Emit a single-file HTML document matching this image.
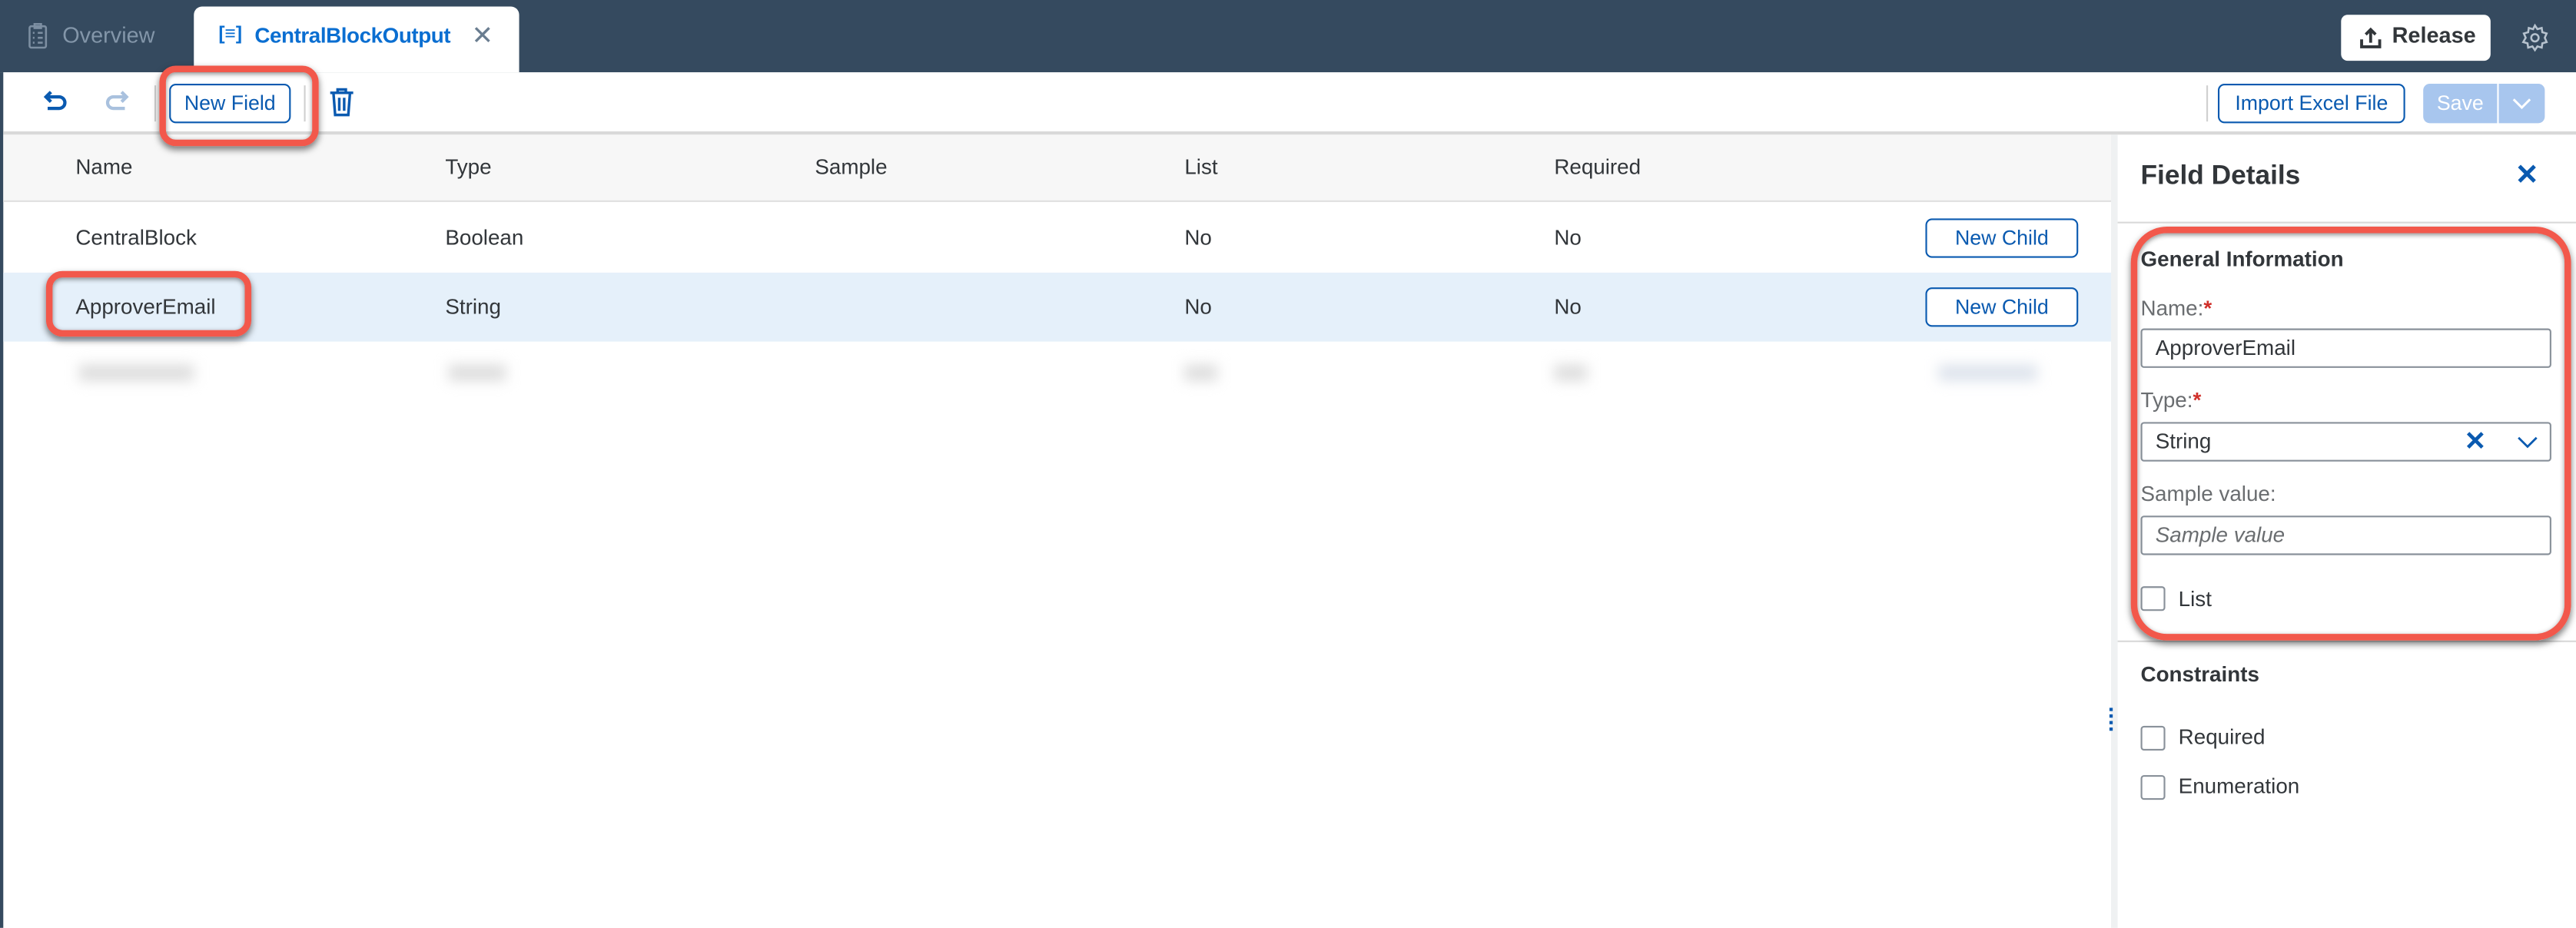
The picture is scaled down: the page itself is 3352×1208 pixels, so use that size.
<!DOCTYPE html>
<html><head><meta charset="utf-8"><style>
html,body{margin:0;padding:0;width:3352px;height:1208px;overflow:hidden;background:#fff}
#w{position:absolute;left:0;top:0;width:1568px;height:565px;transform:scale(2.13776);transform-origin:0 0;font-family:"Liberation Sans",sans-serif;font-size:13px;color:#32363a}
.a{position:absolute}
.btn{position:absolute;border:1px solid #0a5ab0;border-radius:4px;background:#fff;color:#0a5ab0;font-size:12.5px;text-align:center;box-sizing:border-box}
.hl{position:absolute;z-index:5;border:4px solid #f2584b;box-shadow:0 2px 4px rgba(0,0,0,.5),inset 0 1px 3px rgba(0,0,0,.45);box-sizing:border-box}
.inp{position:absolute;left:1303px;width:250px;height:24px;border:1px solid #89919a;border-radius:2px;box-sizing:border-box;padding-left:8px;line-height:22px;font-size:13px}
.cb{position:absolute;left:1303px;width:15px;height:15px;border:1px solid #89919a;border-radius:2px;box-sizing:border-box}
.lbl{position:absolute;left:1303px;color:#6a6d70;font-size:13px}
.req{color:#d0302a;font-weight:bold}
</style></head><body><div id="w">
<div class="a" style="left:0;top:0;width:1568px;height:44px;background:#354a5f"></div>
<div class="a" style="left:0;top:44px;width:2px;height:521px;background:#354a5f"></div>
<svg class="a" style="left:17px;top:14px" width="12" height="16" viewBox="0 0 12 16" fill="none" stroke="#7d8fa2" stroke-width="1.2"><rect x="1" y="2" width="10" height="13" rx="1"/><rect x="4" y="0.6" width="4" height="2.5"/><path d="M3 6h1M6 6h3M3 9h1M6 9h3M3 12h1M6 12h3"/></svg>
<div class="a" style="left:38px;top:14px;color:#8396a9;font-size:13.5px">Overview</div>
<div class="a" style="left:118px;top:4px;width:198px;height:40px;background:#fff;border-radius:5px 5px 0 0"></div>
<div class="a" style="left:133px;top:15px;color:#0a6ed1;font-size:11.5px;font-weight:bold">[≡]</div>
<div class="a" style="left:155px;top:14px;color:#0a6ed1;font-size:13px;font-weight:bold;letter-spacing:-0.2px">CentralBlockOutput</div>
<div class="a" style="left:287px;top:12px;color:#6a7d90;font-size:16px">✕</div>
<div class="a" style="left:1425px;top:9px;width:91px;height:28px;background:#fff;border-radius:4px"></div>
<svg class="a" style="left:1436px;top:16px" width="14" height="14" viewBox="0 0 14 14" fill="none" stroke="#32363a" stroke-width="1.8"><path d="M7 10V2M4 5l3-3 3 3M1.5 8v4.5h11V8"/></svg>
<div class="a" style="left:1456px;top:14px;font-size:13.5px;font-weight:bold;color:#32363a">Release</div>
<svg class="a" style="left:1534px;top:14px" width="18" height="18" viewBox="0 0 24 24" fill="none" stroke="#b6c2ce" stroke-width="1.6"><circle cx="12" cy="12" r="3"/><path d="M12 2l2 3 3.5-1 .5 3.5 3.5 1-1.5 3.5 1.5 3.5-3.5 1-.5 3.5-3.5-1-2 3-2-3-3.5 1-.5-3.5-3.5-1L4.5 12 3 8.5l3.5-1L7 4l3.5 1z"/></svg>
<div class="a" style="left:2px;top:80px;width:1566px;height:2px;background:#d9d9d9"></div>
<svg class="a" style="left:26px;top:54px" width="16" height="16" viewBox="0 0 16 16" fill="none" stroke="#0a5ab0" stroke-width="2"><path d="M5 2L2 5l3 3M2 5h8a3.5 3.5 0 010 7H3"/></svg>
<svg class="a" style="left:63px;top:54px" width="16" height="16" viewBox="0 0 16 16" fill="none" stroke="#a9c1de" stroke-width="2"><path d="M11 2l3 3-3 3M14 5H6a3.5 3.5 0 000 7h7"/></svg>
<div class="a" style="left:94px;top:52px;width:1px;height:22px;background:#d0d0d0"></div>
<div class="btn" style="left:103px;top:51px;width:74px;height:24px;line-height:22px">New Field</div>
<div class="a" style="left:185px;top:52px;width:1px;height:22px;background:#d0d0d0"></div>
<svg class="a" style="left:200px;top:53px" width="16" height="18" viewBox="0 0 16 18" fill="none" stroke="#0a5ab0" stroke-width="1.6"><path d="M1 3.5h14M5.5 3.5V1.5h5v2M3 4l1 13h8l1-13M6.5 6.5v8M9.5 6.5v8"/></svg>
<div class="hl" style="left:97px;top:40px;width:97px;height:49px;border-radius:10px"></div>
<div class="a" style="left:1343px;top:52px;width:1px;height:22px;background:#d0d0d0"></div>
<div class="btn" style="left:1350px;top:51px;width:114px;height:24px;line-height:22px">Import Excel File</div>
<div class="a" style="left:1475px;top:51px;width:45px;height:24px;background:#a8c6ee;border-radius:4px 0 0 4px;color:#fff;font-size:12.5px;text-align:center;line-height:24px">Save</div>
<div class="a" style="left:1521px;top:51px;width:28px;height:24px;background:#a8c6ee;border-radius:0 4px 4px 0"></div>
<svg class="a" style="left:1529px;top:58px" width="12" height="10" viewBox="0 0 12 10" fill="none" stroke="#fff" stroke-width="1.4"><path d="M1 2.5l5 5 5-5"/></svg>
<div class="a" style="left:2px;top:82px;width:1283px;height:40px;background:#f7f7f7;border-bottom:1px solid #e0e0e0"></div>
<div class="a" style="left:46px;top:94px">Name</div>
<div class="a" style="left:271px;top:94px">Type</div>
<div class="a" style="left:496px;top:94px">Sample</div>
<div class="a" style="left:721px;top:94px">List</div>
<div class="a" style="left:946px;top:94px">Required</div>
<div class="a" style="left:46px;top:137px">CentralBlock</div>
<div class="a" style="left:271px;top:137px">Boolean</div>
<div class="a" style="left:721px;top:137px">No</div>
<div class="a" style="left:946px;top:137px">No</div>
<div class="btn" style="left:1172px;top:133px;width:93px;height:24px;line-height:22px">New Child</div>
<div class="a" style="left:2px;top:166px;width:1283px;height:42px;background:#e5f0fa"></div>
<div class="a" style="left:46px;top:179px">ApproverEmail</div>
<div class="a" style="left:271px;top:179px">String</div>
<div class="a" style="left:721px;top:179px">No</div>
<div class="a" style="left:946px;top:179px">No</div>
<div class="btn" style="left:1172px;top:175px;width:93px;height:24px;line-height:22px">New Child</div>
<div class="hl" style="left:28px;top:165px;width:125px;height:40px;border-radius:10px"></div>
<div class="a" style="left:30px;top:210px;width:1240px;height:40px;filter:blur(4px)">
<span class="a" style="left:18px;top:12px;width:70px;height:10px;background:#ddd"></span>
<span class="a" style="left:243px;top:12px;width:35px;height:10px;background:#ddd"></span>
<span class="a" style="left:691px;top:12px;width:20px;height:10px;background:#ddd"></span>
<span class="a" style="left:916px;top:12px;width:20px;height:10px;background:#ddd"></span>
<span class="a" style="left:1150px;top:12px;width:60px;height:10px;background:#dde3ec"></span>
</div>
<div class="a" style="left:1285px;top:82px;width:4px;height:483px;background:#eff1f2"></div>
<div class="a" style="left:1284px;top:431px;width:2px;height:14px;border-left:2px dotted #0a5ab0"></div>
<div class="a" style="left:1303px;top:98px;font-size:16.5px;font-weight:bold">Field Details</div>
<div class="a" style="left:1531px;top:97px;font-size:17px;color:#0a5ab0;font-weight:bold">✕</div>
<div class="a" style="left:1289px;top:135px;width:279px;height:1px;background:#d9d9d9"></div>
<div class="a" style="left:1303px;top:150px;font-weight:bold">General Information</div>
<div class="lbl" style="top:180px">Name:<span class="req">*</span></div>
<div class="inp" style="top:200px">ApproverEmail</div>
<div class="lbl" style="top:236px">Type:<span class="req">*</span></div>
<div class="inp" style="top:257px">String</div>
<div class="a" style="left:1500px;top:259px;color:#0a5ab0;font-size:16px;font-weight:bold">✕</div>
<svg class="a" style="left:1532px;top:265px" width="13" height="9" viewBox="0 0 13 9" fill="none" stroke="#0a5ab0" stroke-width="1.3"><path d="M1 1.5l5.5 5.5 5.5-5.5"/></svg>
<div class="lbl" style="top:293px">Sample value:</div>
<div class="inp" style="top:314px;color:#6a6d70;font-style:italic">Sample value</div>
<div class="cb" style="top:357px"></div>
<div class="a" style="left:1326px;top:357px">List</div>
<div class="a" style="left:1289px;top:390px;width:279px;height:1px;background:#d9d9d9"></div>
<div class="hl" style="left:1297px;top:138px;width:268px;height:252px;border-radius:22px"></div>
<div class="a" style="left:1303px;top:403px;font-weight:bold">Constraints</div>
<div class="cb" style="top:442px"></div>
<div class="a" style="left:1326px;top:441px">Required</div>
<div class="cb" style="top:472px"></div>
<div class="a" style="left:1326px;top:471px">Enumeration</div>
</div></body></html>
